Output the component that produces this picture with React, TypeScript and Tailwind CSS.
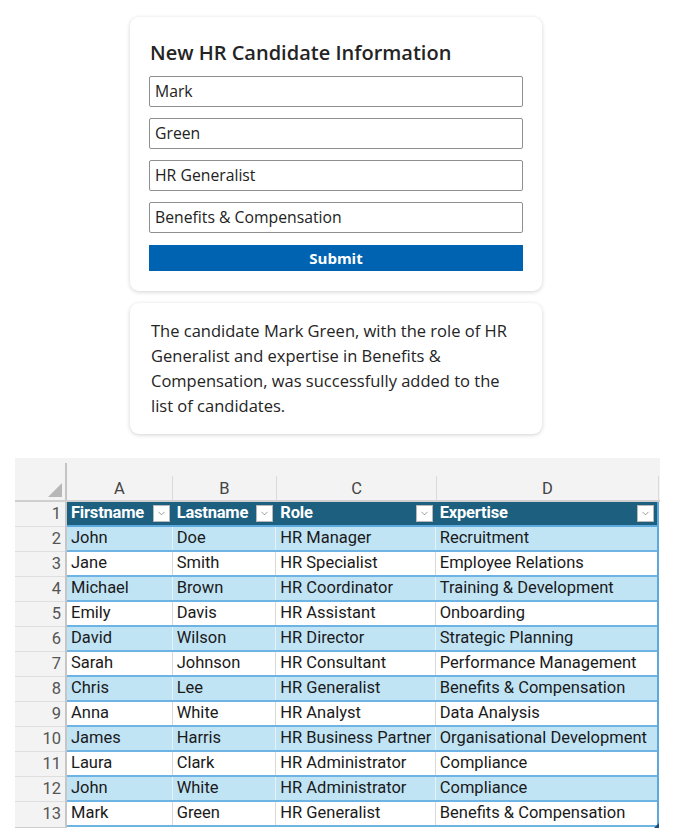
import { ChevronDown } from "lucide-react";

const rows = [
    ["John", "Doe", "HR Manager", "Recruitment"],
    ["Jane", "Smith", "HR Specialist", "Employee Relations"],
    ["Michael", "Brown", "HR Coordinator", "Training & Development"],
    ["Emily", "Davis", "HR Assistant", "Onboarding"],
    ["David", "Wilson", "HR Director", "Strategic Planning"],
    ["Sarah", "Johnson", "HR Consultant", "Performance Management"],
    ["Chris", "Lee", "HR Generalist", "Benefits & Compensation"],
    ["Anna", "White", "HR Analyst", "Data Analysis"],
    ["James", "Harris", "HR Business Partner", "Organisational Development"],
    ["Laura", "Clark", "HR Administrator", "Compliance"],
    ["John", "White", "HR Administrator", "Compliance"],
    ["Mark", "Green", "HR Generalist", "Benefits & Compensation"],
];

const headers = ["Firstname", "Lastname", "Role", "Expertise"];
const letters = ["A", "B", "C", "D"];
const widths = ["w-[106px]", "w-[104px]", "w-[160px]", "w-[222px]"];

function Field({ value }: { value: string }) {
    return (
        <div className="h-[31px] flex items-center px-[5px] border border-[#8f8f8f] rounded-[2px] text-[15.75px] text-[#222]">
            {value}
        </div>
    );
}

function Filter() {
    return (
        <div className="w-[17px] h-[17px] bg-white border border-[#b8b8b8] flex items-center justify-center shrink-0">
            <ChevronDown size={11} strokeWidth={1.5} className="text-[#707070]" />
        </div>
    );
}

export default function App() {
    return (
        <div className="w-[675px] h-[836px] bg-white pt-[17px] overflow-hidden" style={{ fontFamily: '"Open Sans", "Noto Sans", sans-serif' }}>
            {/* form card */}
            <div className="ml-[130px] w-[412px] rounded-[9px] bg-white shadow-[0_1px_4px_rgba(0,0,0,0.18)] px-[19px] pt-[22px] pb-[20px]">
                <h2 className="text-[20px] font-semibold text-[#242424] leading-[28px] pl-[1px]">New HR Candidate Information</h2>
                <div className="mt-[9px] flex flex-col gap-[11px]">
                    <Field value="Mark" />
                    <Field value="Green" />
                    <Field value="HR Generalist" />
                    <Field value="Benefits & Compensation" />
                </div>
                <button className="mt-[12px] w-full h-[26px] bg-[#0063b1] text-white text-[15px] font-bold flex items-center justify-center">
                    Submit
                </button>
            </div>

            {/* result card */}
            <div className="ml-[130px] mt-[12px] w-[412px] rounded-[9px] bg-white shadow-[0_1px_4px_rgba(0,0,0,0.18)] pl-[21px] pr-[20px] pt-[15px] pb-[16px]">
                <p className="text-[16.5px] leading-[25px] text-[#242424]">
                    The candidate Mark Green, with the role of HR Generalist and expertise in Benefits &amp; Compensation, was successfully added to the list of candidates.
                </p>
            </div>

            {/* sheet */}
            <div className="ml-[15px] mt-[24px] w-[645px]" style={{ fontFamily: 'Roboto, "Liberation Sans", sans-serif' }}>
                <div className="flex h-[44px] bg-[#f3f3f3] border-b-2 border-[#cfcfcf]">
                    <div className="w-[52px] relative">
                        <div className="absolute right-0 top-[5px] bottom-0 w-[2px] bg-[#c4c4c4]" />
                        <svg className="absolute right-[5px] bottom-[3px]" width="14" height="14" viewBox="0 0 14 14">
                            <polygon points="14,0 14,14 0,14" fill="#b7b7b7" />
                        </svg>
                    </div>
                    <div className="flex-1 flex flex-col">
                        <div className="h-[19px]" />
                        <div className="flex h-[25px]">
                            {letters.map((l, i) => (
                                <div key={l} className={`${widths[i]} border-r border-[#dadada] flex items-center justify-center pt-[3px] text-[16.5px] text-[#444] leading-none`}>
                                    {l}
                                </div>
                            ))}
                        </div>
                    </div>
                </div>

                <div className="flex">
                    <div className="w-[52px] bg-[#f3f3f3] border-r-2 border-[#c6c6c6] border-b border-b-[#cfcfcf]">
                        {Array.from({ length: 13 }, (_, i) => (
                            <div key={i} className="h-[25px] border-b border-[#dedede] last:border-b-0 flex items-center justify-end pr-[4px] text-[16.5px] text-[#555]">
                                {i + 1}
                            </div>
                        ))}
                    </div>
                    <div className="w-[592px] border-r-2 border-[#5da8dd] relative">
                        <div className="flex h-[25px] bg-[#1d5f7f] border-b-2 border-[#5da8dd]">
                            {headers.map((h, i) => (
                                <div key={h} className={`${widths[i]} flex items-center justify-between pl-[4px] pr-[3px] text-[16.5px] font-bold text-white tracking-[-0.2px]`}>
                                    <span>{h}</span>
                                    <Filter />
                                </div>
                            ))}
                        </div>
                        {rows.map((r, ri) => (
                            <div key={ri} className={`flex h-[25px] border-b-2 border-[#6db3e3] ${ri % 2 === 0 ? "bg-[#c1e4f5]" : "bg-white"}`}>
                                {r.map((c, ci) => (
                                    <div key={ci} className={`${widths[ci]} ${ci < 3 ? (ri % 2 === 0 ? "border-r border-[#e6f2f9]" : "border-r border-[#d9d9d9]") : ""} flex items-center pl-[4px] text-[16.5px] text-[#1a1a1a] whitespace-nowrap`}>
                                        {c}
                                    </div>
                                ))}
                            </div>
                        ))}
                        <div className="absolute right-[-2px] bottom-0 w-[5px] h-[5px] bg-[#1d4f7a] [clip-path:polygon(100%_0,100%_100%,0_100%)]" />
                    </div>
                </div>
            </div>
        </div>
    );
}
